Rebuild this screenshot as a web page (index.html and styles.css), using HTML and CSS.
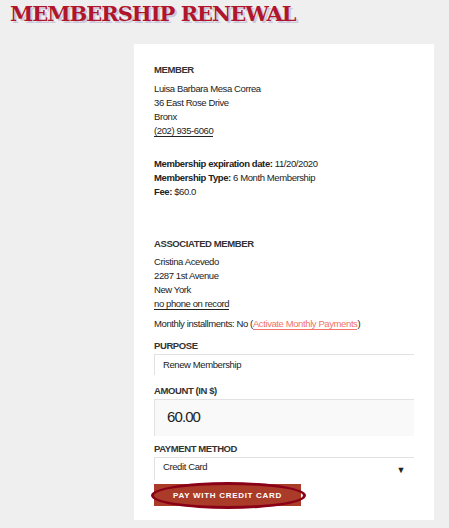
FILE: index.html
```html
<!DOCTYPE html>
<html lang="en">
<head>
  <meta charset="UTF-8">
  <title>Membership Renewal</title>
  <link rel="stylesheet" href="styles.css">
</head>
<body>

  <h1 class="page-title">MEMBERSHIP RENEWAL</h1>

  <div class="card">
    <div class="section">
      <div class="label">MEMBER</div>
      <div class="line">Luisa Barbara Mesa Correa</div>
      <div class="line">36 East Rose Drive</div>
      <div class="line">Bronx</div>
      <div class="line"><a class="phone" href="#">(202) 935-6060</a></div>
    </div>

    <div class="section details">
      <div class="line"><b>Membership expiration date:</b> 11/20/2020</div>
      <div class="line"><b>Membership Type:</b> 6 Month Membership</div>
      <div class="line"><b>Fee:</b> $60.0</div>
    </div>

    <div class="section associated">
      <div class="label">ASSOCIATED MEMBER</div>
      <div class="line">Cristina Acevedo</div>
      <div class="line">2287 1st Avenue</div>
      <div class="line">New York</div>
      <div class="line"><a class="phone" href="#">no phone on record</a></div>
      <div class="installments">Monthly installments: No (<a class="activate" href="#">Activate Monthly Payments</a>)</div>
    </div>

    <div class="field purpose">
      <div class="field-label">PURPOSE</div>
      <div class="input">Renew Membership</div>
    </div>

    <div class="field">
      <div class="field-label">AMOUNT (IN $)</div>
      <div class="input amount">60.00</div>
    </div>

    <div class="field method">
      <div class="field-label">PAYMENT METHOD</div>
      <div class="input select">
        <span>Credit Card</span>
        <span class="arrow">▼</span>
      </div>
    </div>

    <button class="pay-btn">PAY WITH CREDIT CARD</button>
  </div>

</body>
</html>
```

FILE: styles.css
```css
body {
  margin: 0;
  background-color: #efefef;
  font-family: "Liberation Sans", Arial, sans-serif;
  color: #222;
}

.page-title {
  margin: 0;
  padding: 1px 0 0 10px;
  height: 43px;
  font-family: "DejaVu Serif", serif;
  font-weight: bold;
  font-size: 21px;
  letter-spacing: -1px;
  color: #b0162b;
  text-shadow: 2px 2px 0 #cbc8dc;
}

.card {
  width: 260px;
  margin-left: 134px;
  padding: 20px 20px 14px 20px;
  background: #fff;
  font-size: 9.5px;
  letter-spacing: -0.4px;
}

.label {
  font-weight: bold;
  font-size: 9.5px;
  margin-bottom: 7px;
  color: #333;
}

.associated .label {
  margin-bottom: 6px;
}

.line {
  line-height: 14px;
}

.phone {
  color: #222;
  text-decoration: none;
  border-bottom: 1px solid #222;
}

.details {
  margin-top: 19px;
}

.associated {
  margin-top: 39px;
}

.installments {
  margin-top: 6px;
  line-height: 14px;
}

.activate {
  color: #f07468;
  text-decoration: none;
  border-bottom: 1px solid #f07468;
}

.field {
  margin-top: 10px;
}

.purpose {
  margin-top: 9px;
}

.method {
  margin-top: 7px;
}

.field-label {
  font-size: 9.5px;
  font-weight: bold;
  color: #333;
  margin-bottom: 3px;
}

.input {
  height: 20px;
  padding: 0 8px;
  border-top: 1px solid #e2e2e2;
  border-left: 1px solid #e2e2e2;
  line-height: 20px;
}

.amount {
  height: 36px;
  line-height: 34px;
  background: #f9f9f9;
  font-size: 15px;
  letter-spacing: -0.9px;
  padding-left: 12px;
}

.select {
  display: flex;
  justify-content: space-between;
  height: 22px;
  line-height: 18px;
}

.arrow {
  font-size: 9px;
  padding-top: 3px;
  margin-right: 1px;
}

.pay-btn {
  position: relative;
  display: block;
  margin-top: 4px;
  width: 147px;
  height: 22px;
  border: none;
  background: #a93b28;
  color: #fff;
  font-family: "Liberation Sans", Arial, sans-serif;
  font-weight: bold;
  font-size: 8px;
  letter-spacing: 0.7px;
  cursor: pointer;
}

.pay-btn::after {
  content: "";
  position: absolute;
  left: -3px;
  right: -5px;
  top: -2px;
  bottom: -3px;
  border: 3px solid #8a0018;
  border-radius: 50%;
}
```
